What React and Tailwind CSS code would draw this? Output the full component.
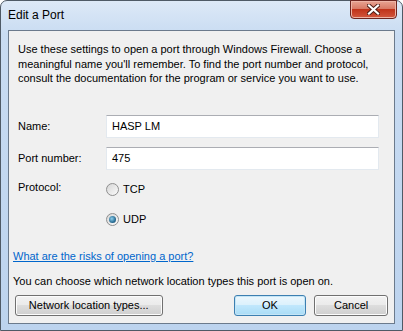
import React from "react";

const font = { fontFamily: '"Liberation Sans", Arial, sans-serif' };

function Radio({ checked, label }) {
  return (
    <label className="flex items-center gap-[4px] h-[15px]">
      <span className="relative w-[13px] h-[13px] rounded-full border border-[#8f8f8f] bg-gradient-to-br from-[#d6d6d6] to-[#fbfbfb] flex items-center justify-center">
        {checked && (
          <span className="w-[7px] h-[7px] rounded-full bg-[radial-gradient(circle_at_40%_40%,#8fd0ee_0%,#2a6e95_60%,#0d3b5a_100%)]" />
        )}
      </span>
      <span>{label}</span>
    </label>
  );
}

function Button({ children, primary, className = "" }) {
  return (
    <button
      type="button"
      className={
        "h-[21px] rounded-[3px] border text-[11px] leading-none text-black " +
        (primary
          ? "border-[#3c7fb1] bg-[linear-gradient(#ecf7fd_0%,#dcf1fc_45%,#c0e7fc_50%,#a9dcf6_100%)] shadow-[inset_0_0_0_1px_#c4e5f6] "
          : "border-[#707070] bg-[linear-gradient(#f2f2f2_0%,#ebebeb_45%,#dddddd_50%,#cfcfcf_100%)] shadow-[inset_0_0_0_1px_#fcfcfc] ") +
        className
      }
    >
      {children}
    </button>
  );
}

export default function App() {
  return (
    <div
      className="w-[403px] h-[331px] overflow-hidden bg-white text-[11px] text-black"
      style={font}
    >
      <div className="w-full h-full rounded-t-[7px] border border-[#4f5a66] bg-[linear-gradient(180deg,#dde9f7_0%,#c9dcf2_10%,#bcd3ee_100%)] flex flex-col">
        {/* title bar */}
        <div className="relative h-[29px] flex items-center pl-[7px]">
          <span className="text-[12px] text-black -mt-[1px]">Edit a Port</span>
          <div className="absolute right-[5px] top-[-1px] w-[47px] h-[19px] rounded-b-[4px] border border-[#6d2520] bg-[linear-gradient(#e8a493_0%,#d87a66_45%,#c0331a_50%,#d2583f_100%)] flex items-center justify-center shadow-[inset_0_0_0_1px_#eeb4a6]">
            <svg width="13" height="11" viewBox="0 0 13 11">
              <path
                d="M2 1.5 L11 9.5 M11 1.5 L2 9.5"
                stroke="#4a1b14"
                strokeWidth="4"
                strokeLinecap="square"
              />
              <path
                d="M2 1.5 L11 9.5 M11 1.5 L2 9.5"
                stroke="#ffffff"
                strokeWidth="2.2"
                strokeLinecap="square"
              />
            </svg>
          </div>
        </div>

        {/* content */}
        <div className="mx-[7px] mb-[6px] flex-1 border border-[#6b7a8c] bg-[#f0f0f0] flex flex-col">
          <p className="pt-[11px] pl-[9px] leading-[14.5px] whitespace-nowrap">
            Use these settings to open a port through Windows Firewall. Choose a
            <br />
            meaningful name you'll remember. To find the port number and protocol,
            <br />
            consult the documentation for the program or service you want to use.
          </p>

          <div className="mt-[29px] pl-[9px] flex items-center">
            <span className="w-[88px]">Name:</span>
            <div className="w-[273px] h-[23px] bg-white border border-[#e3e9ef] border-t-[#abadb3] flex items-center pl-[5px]">
              HASP LM
            </div>
          </div>

          <div className="mt-[9px] pl-[9px] flex items-center">
            <span className="w-[88px]">Port number:</span>
            <div className="w-[273px] h-[23px] bg-white border border-[#e3e9ef] border-t-[#abadb3] flex items-center pl-[5px]">
              475
            </div>
          </div>

          <div className="mt-[11px] pl-[9px] flex">
            <span className="w-[88px] -mt-[2px]">Protocol:</span>
            <div className="flex flex-col gap-[15px] pt-[1px]">
              <Radio label="TCP" />
              <Radio label="UDP" checked />
            </div>
          </div>

          <a className="mt-[21px] pl-[4px] text-[#0066cc] underline underline-offset-1 w-fit">
            What are the risks of opening a port?
          </a>

          <p className="mt-[9px] pl-[4px]">
            You can choose which network location types this port is open on.
          </p>

          <div className="mt-[5px] flex pl-[6px] pr-[6px]">
            <Button className="w-[148px]">Network location types...</Button>
            <Button primary className="w-[73px] ml-[71px]">OK</Button>
            <Button className="w-[74px] ml-[8px]">Cancel</Button>
          </div>
        </div>
      </div>
    </div>
  );
}
